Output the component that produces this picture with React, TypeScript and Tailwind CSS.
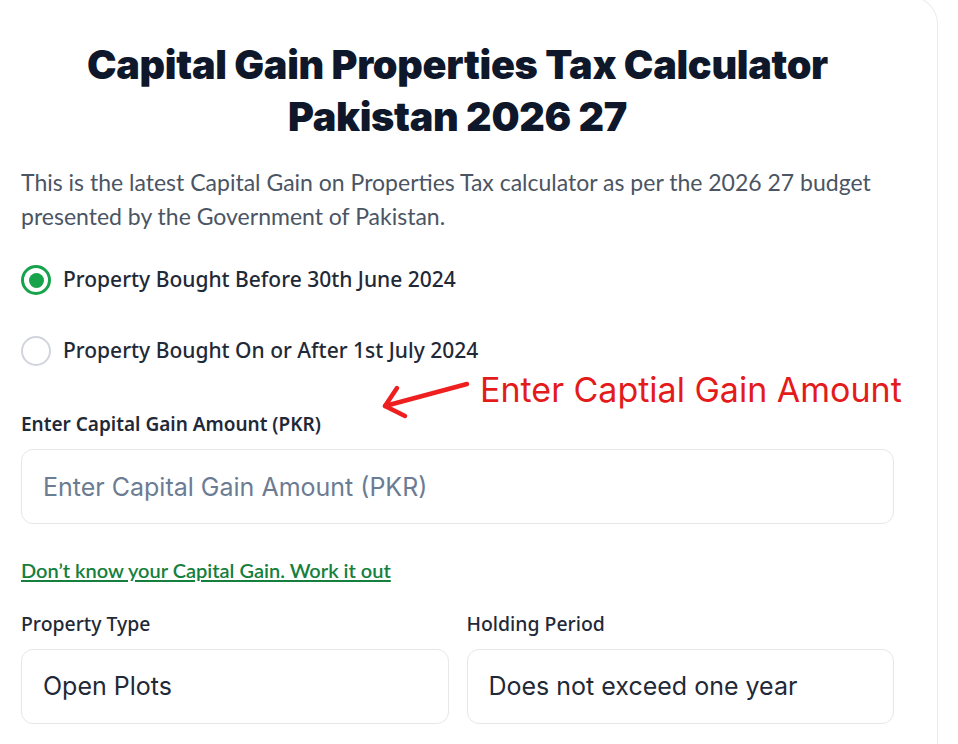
import { useState } from 'react'

export default function App() {
  const [bought, setBought] = useState<'before' | 'after'>('before')

  const options = [
    { id: 'before' as const, label: 'Property Bought Before 30th June 2024' },
    { id: 'after' as const, label: 'Property Bought On or After 1st July 2024' },
  ]

  return (
    <main className="min-h-screen bg-white overflow-hidden" style={{ fontFamily: '"Noto Sans", sans-serif' }}>
      <div className="w-[938px] -mt-[4px] bg-white border-r border-t border-[#ececec] rounded-tr-[28px]">
        <div className="pl-[21px] pr-[43px] pt-[42px] pb-10">
          <h1 className="text-center text-[39.6px] leading-[52px] font-black text-[#0f172a] tracking-[-0.3px] px-6" style={{ fontFamily: 'Inter, sans-serif' }}>
            Capital Gain Properties Tax Calculator Pakistan 2026 27
          </h1>

          <p className="mt-[22px] text-[23px] leading-[34px] text-[#4b5563]" style={{ fontFamily: 'Lato, sans-serif' }}>
            This is the latest Capital Gain on Properties Tax calculator as per the 2026 27 budget presented by the
            Government of Pakistan.
          </p>

          <div className="mt-[32px] flex flex-col gap-[41px]">
            {options.map((o) => (
              <label key={o.id} className="flex items-center gap-[12px] cursor-pointer h-[30px]">
                <span
                  className={
                    bought === o.id
                      ? 'w-[30px] h-[30px] rounded-full border-[3px] border-[#16a34a] flex items-center justify-center'
                      : 'w-[30px] h-[30px] rounded-full border-[2px] border-[#d1d5db] flex items-center justify-center'
                  }
                >
                  {bought === o.id && <span className="w-[15px] h-[15px] rounded-full bg-[#16a34a]" />}
                </span>
                <input type="radio" className="hidden" checked={bought === o.id} onChange={() => setBought(o.id)} />
                <span className="text-[21px] font-medium text-[#1f2937]">{o.label}</span>
              </label>
            ))}
          </div>

          <div className="relative mt-[45px]">
            <svg className="absolute left-[359px] -top-[32px] pointer-events-none" width="92" height="42" viewBox="0 0 92 42" fill="none">
              <path d="M87 5 L5 27" stroke="#ef1f1f" strokeWidth="4.5" strokeLinecap="round" />
              <path d="M17 9 L5 27 L25 37" stroke="#ef1f1f" strokeWidth="4.5" strokeLinecap="round" strokeLinejoin="round" />
            </svg>
            <span
              className="absolute left-[459px] -top-[38px] text-[34px] leading-[34px] text-[#e31b1b] whitespace-nowrap pointer-events-none"
              style={{ fontFamily: 'Inter, sans-serif' }}
            >
              Enter Captial Gain Amount
            </span>

            <label className="block text-[19px] font-semibold text-[#1f2937] leading-[26px]">
              Enter Capital Gain Amount (PKR)
            </label>
            <input
              type="text"
              placeholder="Enter Capital Gain Amount (PKR)"
              className="mt-[12px] w-full h-[75px] rounded-[12px] border border-[#e5e7eb] px-[21px] text-[25px] text-[#1f2937] placeholder:text-[#6b7c93] outline-none"
              style={{ fontFamily: 'Inter, sans-serif' }}
            />
          </div>

          <a
            href="#"
            className="mt-[33px] block w-fit text-[20px] leading-[26px] font-semibold text-[#15803d] underline underline-offset-2"
            style={{ fontFamily: 'Lato, sans-serif' }}
          >
            Don’t know your Capital Gain. Work it out
          </a>

          <div className="mt-[28px] grid grid-cols-2 gap-[18px]">
            <div>
              <div className="text-[19.4px] font-medium text-[#1f2937] leading-[26px]">Property Type</div>
              <div className="mt-[12px] h-[75px] rounded-[12px] border border-[#e5e7eb] px-[21px] flex items-center text-[25px] text-[#1f2937]" style={{ fontFamily: 'Inter, sans-serif' }}>
                Open Plots
              </div>
            </div>
            <div>
              <div className="text-[19.4px] font-medium text-[#1f2937] leading-[26px]">Holding Period</div>
              <div className="mt-[12px] h-[75px] rounded-[12px] border border-[#e5e7eb] px-[21px] flex items-center text-[25px] text-[#1f2937]" style={{ fontFamily: 'Inter, sans-serif' }}>
                Does not exceed one year
              </div>
            </div>
          </div>
        </div>
      </div>
    </main>
  )
}
